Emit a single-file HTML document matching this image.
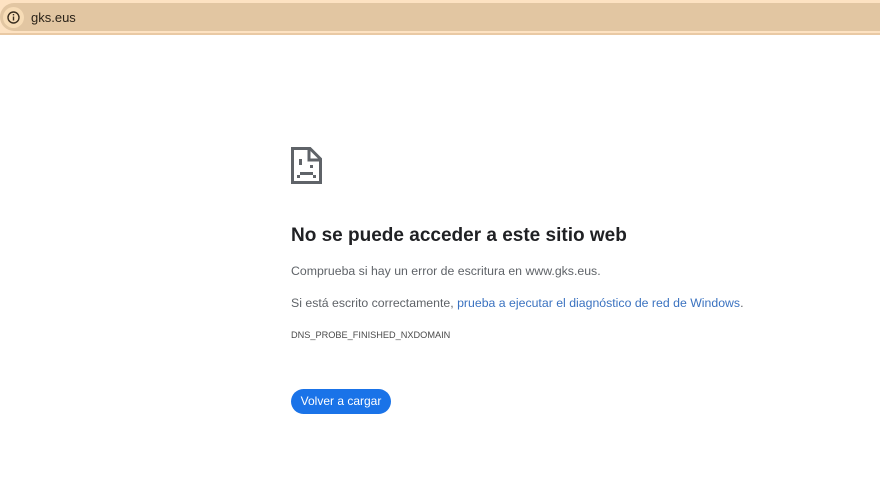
<!DOCTYPE html>
<html><head><style>
body{margin:0;width:880px;height:495px;background:#fff;font-family:"Liberation Sans",Arial,sans-serif;overflow:hidden;position:relative}
.bar{position:absolute;left:0;top:0;width:880px;height:33px;background:#fde2c2;border-bottom:2px solid #e9c9a4}
.pill{position:absolute;left:0;top:3px;width:880px;height:28px;background:#e2c6a2;border-radius:14px 0 0 14px}
.ic{position:absolute;left:3px;top:4px;width:21px;height:21px;border-radius:50%;background:#f7dcb6}
.ic svg{position:absolute;left:3px;top:3px}
.url{position:absolute;left:31px;top:7px;font-size:13px;color:#2a2218}
.c{position:absolute;left:291px}
h1{margin:0;font-size:19px;font-weight:600;color:#202124;position:absolute;left:291px;top:225px;letter-spacing:0}
p{margin:0;font-size:12.3px;color:#5f6368;position:absolute;left:291px}
a{text-decoration:none;color:#3a72c0}
.btn{position:absolute;left:291px;top:389px;width:100px;height:25px;border-radius:13px;background:#1a73e8;color:#fff;font-size:12px;text-align:center;line-height:25px}
</style></head><body>
<div class="bar"><div class="pill"><div class="ic"><svg width="15" height="15" viewBox="0 0 15 15"><circle cx="7.5" cy="7.5" r="5.5" fill="none" stroke="#3a2e20" stroke-width="1.4"/><rect x="6.8" y="6.5" width="1.4" height="4" fill="#3a2e20"/><rect x="6.8" y="4" width="1.4" height="1.4" fill="#3a2e20"/></svg></div><div class="url">gks.eus</div></div></div>
<svg class="c" style="top:147px" width="31" height="37" viewBox="0 0 31 37">
<path d="M1.5 1.5H19L29.5 12V35.5H1.5Z" fill="none" stroke="#5f6368" stroke-width="3"/>
<path d="M18 3V13H28" fill="none" stroke="#5f6368" stroke-width="3"/>
<rect x="8" y="12" width="3" height="6" fill="#5f6368"/><rect x="19" y="18" width="3" height="3" fill="#5f6368"/>
<rect x="9" y="25" width="13" height="3" fill="#5f6368"/><rect x="6" y="28" width="3" height="3" fill="#5f6368"/><rect x="22" y="28" width="3" height="3" fill="#5f6368"/>
</svg>
<h1>No se puede acceder a este sitio web</h1>
<p style="top:264px">Comprueba si hay un error de escritura en www.gks.eus.</p>
<p style="top:296px">Si está escrito correctamente, <a>prueba a ejecutar el diagnóstico de red de Windows</a>.</p>
<p style="top:330px;font-size:9.2px;color:#4a4a4a">DNS_PROBE_FINISHED_NXDOMAIN</p>
<div class="btn">Volver a cargar</div>
</body></html>
